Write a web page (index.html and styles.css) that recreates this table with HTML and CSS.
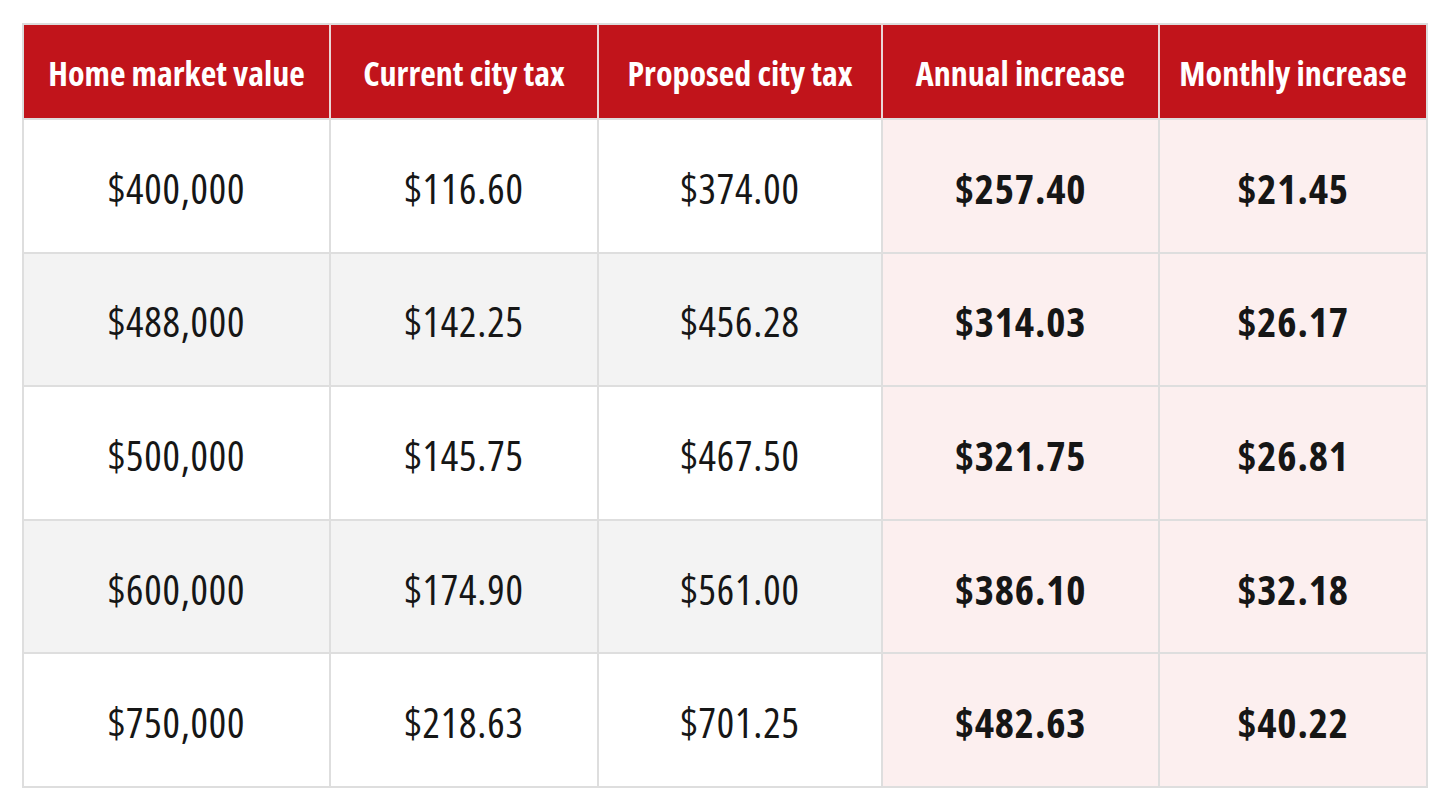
FILE: index.html
```html
<!DOCTYPE html>
<html lang="en">
<head>
<meta charset="utf-8">
<title>City tax increase by home value</title>
<link rel="stylesheet" href="styles.css">
</head>
<body>
<main class="page">
  <table class="tax-table">
    <colgroup>
      <col class="c1"><col class="c2"><col class="c3"><col class="c4"><col class="c5">
    </colgroup>
    <thead>
      <tr>
        <th>Home market value</th>
        <th>Current city tax</th>
        <th>Proposed city tax</th>
        <th>Annual increase</th>
        <th>Monthly increase</th>
      </tr>
    </thead>
    <tbody>
      <tr>
        <td>$400,000</td><td>$116.60</td><td>$374.00</td>
        <td class="hl">$257.40</td><td class="hl">$21.45</td>
      </tr>
      <tr class="alt">
        <td>$488,000</td><td>$142.25</td><td>$456.28</td>
        <td class="hl">$314.03</td><td class="hl">$26.17</td>
      </tr>
      <tr>
        <td>$500,000</td><td>$145.75</td><td>$467.50</td>
        <td class="hl">$321.75</td><td class="hl">$26.81</td>
      </tr>
      <tr class="alt">
        <td>$600,000</td><td>$174.90</td><td>$561.00</td>
        <td class="hl">$386.10</td><td class="hl">$32.18</td>
      </tr>
      <tr>
        <td>$750,000</td><td>$218.63</td><td>$701.25</td>
        <td class="hl">$482.63</td><td class="hl">$40.22</td>
      </tr>
    </tbody>
  </table>
</main>
</body>
</html>
```
FILE: styles.css
```css
html, body {
  margin: 0;
  padding: 0;
  background: #ffffff;
}

.page {
  padding: 23px 22px 0 22px;
}

.tax-table {
  width: 1404px;
  border-collapse: collapse;
  table-layout: fixed;
  font-family: "Open Sans", "Roboto", sans-serif;
  font-stretch: 75%;
  color: #161616;
  border: 2px solid #dcdcdc;
}

.c1 { width: 307px; }
.c2 { width: 268px; }
.c3 { width: 284px; }
.c4 { width: 277px; }
.c5 { width: 268px; }

.tax-table th {
  height: 91px;
  padding: 2px 0 0 0;
  background: #c1141b;
  color: #ffffff;
  font-size: 34px;
  font-weight: 700;
  text-align: center;
  vertical-align: middle;
  border-left: 2px solid #ead6d6;
  white-space: nowrap;
}

.tax-table th:first-child {
  border-left: 2px solid #dcdcdc;
}

.tax-table td {
  height: 127.6px;
  padding: 4px 0 0 0;
  text-align: center;
  vertical-align: middle;
  font-size: 41px;
  letter-spacing: 0.8px;
  font-weight: 400;
  border: 2px solid #dedede;
  background: #ffffff;
}

.tax-table tr.alt td {
  background: #f3f3f3;
}

.tax-table td.hl,
.tax-table tr.alt td.hl {
  background: #fcefef;
  font-weight: 700;
}
```
